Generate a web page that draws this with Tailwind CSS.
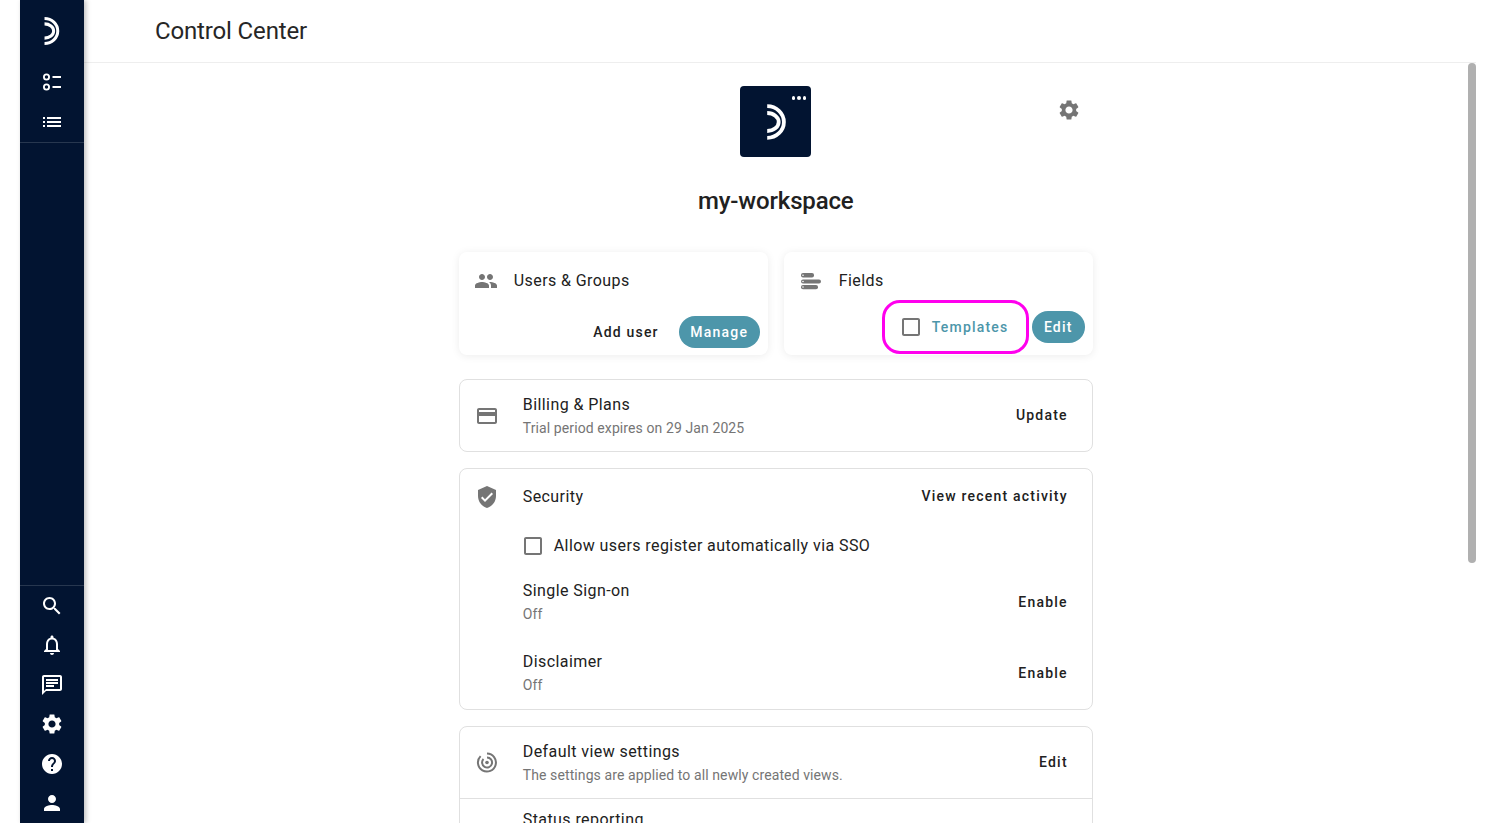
<!doctype html>
<html lang="en">
<head>
<meta charset="utf-8">
<title>Control Center</title>
<script src="https://cdn.jsdelivr.net/npm/@tailwindcss/browser@4"></script>
</head>
<body class="m-0 bg-white font-['Roboto',sans-serif]">
<div class="flex h-[823px] w-[1496px] overflow-hidden bg-white pl-5 pr-5 text-[#212121]">
  <aside class="z-10 flex h-full w-[63.5px] shrink-0 flex-col justify-between bg-[#021431] text-white shadow-[2px_0_5px_rgba(0,0,0,0.25)]">
    <div class="border-b border-white/15">
      <div class="flex h-[62px] items-center justify-center">
        <svg width="19" height="32" viewBox="0 0 24 40" fill="none" stroke="white" stroke-width="3.800"><path d="M3.200 4.100A16.700 15.900 0 0 1 3.200 35.900"/><path d="M3.200 11A11.500 9 0 0 1 3.200 29"/></svg>
      </div>
      <div class="flex h-10 items-center justify-center">
        <svg width="24" height="24" viewBox="0 0 24 24" fill="none" stroke="white" stroke-width="1.800"><circle cx="6.500" cy="7" r="2.600"/><circle cx="6.500" cy="17" r="2.600"/><path d="M12.500 7H21M12.500 17H21"/></svg>
      </div>
      <div class="flex h-10 items-center justify-center">
        <svg width="24" height="24" viewBox="0 0 24 24" fill="white"><path d="M3 13h2v-2H3v2zm0 4h2v-2H3v2zm0-8h2V7H3v2zm4 4h14v-2H7v2zm0 4h14v-2H7v2zM7 7v2h14V7H7z"/></svg>
      </div>
    </div>
    <div class="border-t border-white/15">
      <div class="flex h-[39.5px] items-center justify-center"><svg width="24" height="24" viewBox="0 0 24 24" fill="white"><path d="M15.500 14h-.79l-.28-.27C15.410 12.590 16 11.110 16 9.500 16 5.910 13.090 3 9.500 3S3 5.910 3 9.500 5.910 16 9.500 16c1.610 0 3.090-.59 4.230-1.570l.27.28v.79l5 4.990L20.490 19l-4.990-5zm-6 0C7.010 14 5 11.990 5 9.500S7.010 5 9.500 5 14 7.010 14 9.500 11.990 14 9.500 14z"/></svg></div>
      <div class="flex h-[39.5px] items-center justify-center"><svg width="24" height="24" viewBox="0 0 24 24" fill="white"><path d="M12 22c1.100 0 2-.9 2-2h-4c0 1.100.9 2 2 2zm6-6v-5c0-3.070-1.630-5.640-4.500-6.320V4c0-.83-.67-1.500-1.500-1.500s-1.500.67-1.500 1.500v.68C7.640 5.360 6 7.920 6 11v5l-2 2v1h16v-1l-2-2zm-2 1H8v-6c0-2.480 1.510-4.500 4-4.500s4 2.020 4 4.500v6z"/></svg></div>
      <div class="flex h-[39.5px] items-center justify-center"><svg width="24" height="24" viewBox="0 0 24 24" fill="white"><path d="M20 2H4c-1.100 0-2 .9-2 2v18l4-4h14c1.100 0 2-.9 2-2V4c0-1.100-.9-2-2-2zm0 14H6l-2 2V4h16v12zM6 12h8v2H6zm0-3h12v2H6zm0-3h12v2H6z"/></svg></div>
      <div class="flex h-[39.5px] items-center justify-center"><svg width="24" height="24" viewBox="0 0 24 24" fill="white"><path d="M19.140 12.940c.04-.3.06-.61.06-.94 0-.32-.02-.64-.07-.94l2.030-1.580c.18-.14.23-.41.12-.61l-1.920-3.320c-.12-.22-.37-.29-.59-.22l-2.390.96c-.5-.38-1.030-.7-1.620-.94l-.36-2.540c-.04-.24-.24-.41-.48-.41h-3.840c-.24 0-.43.17-.47.41l-.36 2.540c-.59.24-1.130.57-1.620.94l-2.390-.96c-.22-.08-.47 0-.59.22L2.740 8.870c-.12.21-.08.47.12.61l2.030 1.580c-.05.3-.09.63-.09.94s.02.64.07.94l-2.030 1.580c-.18.14-.23.41-.12.61l1.920 3.320c.12.22.37.29.59.22l2.390-.96c.5.38 1.030.7 1.620.94l.36 2.540c.05.24.24.41.48.41h3.840c.24 0 .44-.17.47-.41l.36-2.540c.59-.24 1.130-.56 1.620-.94l2.390.96c.22.08.47 0 .59-.22l1.920-3.320c.12-.22.07-.47-.12-.61l-2.010-1.580zM12 15.600c-1.980 0-3.600-1.620-3.600-3.600s1.620-3.600 3.600-3.600 3.600 1.620 3.600 3.600-1.620 3.600-3.600 3.600z"/></svg></div>
      <div class="flex h-[39.5px] items-center justify-center"><svg width="24" height="24" viewBox="0 0 24 24" fill="white"><path d="M12 2C6.480 2 2 6.480 2 12s4.480 10 10 10 10-4.480 10-10S17.520 2 12 2zm1 17h-2v-2h2v2zm2.070-7.750l-.9.92C13.450 12.900 13 13.500 13 15h-2v-.5c0-1.100.45-2.100 1.170-2.830l1.240-1.260c.37-.36.59-.86.59-1.410 0-1.100-.9-2-2-2s-2 .9-2 2H8c0-2.210 1.790-4 4-4s4 1.790 4 4c0 .88-.36 1.680-.93 2.250z"/></svg></div>
      <div class="flex h-[39.5px] items-center justify-center"><svg width="24" height="24" viewBox="0 0 24 24" fill="white"><path d="M12 12c2.210 0 4-1.790 4-4s-1.790-4-4-4-4 1.790-4 4 1.790 4 4 4zm0 2c-2.670 0-8 1.340-8 4v2h16v-2c0-2.660-5.330-4-8-4z"/></svg></div>
    </div>
  </aside>

  <main class="flex min-w-0 flex-1 flex-col">
    <header class="flex h-[63px] shrink-0 items-center border-b border-[#eeeeee] pl-[71.5px]">
      <h1 class="text-2xl font-normal leading-8 tracking-[-0.15px] text-[#262626]">Control Center</h1>
    </header>
    <div class="flex min-h-0 flex-1">
      <div class="flex-1 overflow-hidden">
        <div class="mx-auto w-[634px] pt-[23px]">
          <div class="grid grid-cols-[1fr_71px_1fr]">
            <div></div>
            <div class="relative flex h-[71px] w-[71px] items-center justify-center rounded bg-[#021431]">
              <svg width="24" height="40" viewBox="0 0 24 40" fill="none" stroke="white" stroke-width="3.800"><path d="M3.200 4.100A16.700 15.900 0 0 1 3.200 35.900"/><path d="M3.200 11A11.500 9 0 0 1 3.200 29"/></svg>
              <div class="absolute right-[5px] top-[10px] flex gap-[2px]">
                <span class="h-[3.500px] w-[3.500px] rounded-full bg-white"></span>
                <span class="h-[3.500px] w-[3.500px] rounded-full bg-white"></span>
                <span class="h-[3.500px] w-[3.500px] rounded-full bg-white"></span>
              </div>
            </div>
            <div class="flex justify-end pr-3 pt-3">
              <svg width="24" height="24" viewBox="0 0 24 24" fill="#757575"><path d="M19.140 12.940c.04-.3.06-.61.06-.94 0-.32-.02-.64-.07-.94l2.030-1.580c.18-.14.23-.41.12-.61l-1.920-3.320c-.12-.22-.37-.29-.59-.22l-2.390.96c-.5-.38-1.030-.7-1.620-.94l-.36-2.540c-.04-.24-.24-.41-.48-.41h-3.840c-.24 0-.43.17-.47.41l-.36 2.540c-.59.24-1.130.57-1.620.94l-2.390-.96c-.22-.08-.47 0-.59.22L2.740 8.870c-.12.21-.08.47.12.61l2.030 1.580c-.05.3-.09.63-.09.94s.02.64.07.94l-2.030 1.580c-.18.14-.23.41-.12.61l1.920 3.320c.12.22.37.29.59.22l2.390-.96c.5.38 1.030.7 1.620.94l.36 2.540c.05.24.24.41.48.41h3.840c.24 0 .44-.17.47-.41l.36-2.540c.59-.24 1.130-.56 1.620-.94l2.390.96c.22.08.47 0 .59-.22l1.920-3.320c.12-.22.07-.47-.12-.61l-2.010-1.580zM12 15.600c-1.980 0-3.600-1.620-3.600-3.600s1.620-3.600 3.600-3.600 3.600 1.620 3.600 3.600-1.620 3.600-3.600 3.600z"/></svg>
            </div>
          </div>
          <h2 class="mt-[28px] text-center text-2xl font-medium leading-8 tracking-[-0.15px] text-[#212121]">my-workspace</h2>

          <div class="mt-[35px] grid grid-cols-2 gap-4">
            <section class="h-[103px] rounded-lg bg-white shadow-[0_1px_8px_rgba(0,0,0,0.08)]">
              <div class="flex h-[57px] items-center gap-4 pl-[15px]">
                <svg width="24" height="24" viewBox="0 0 24 24" fill="#757575"><path d="M16 11c1.660 0 2.990-1.340 2.990-3S17.660 5 16 5c-1.660 0-3 1.340-3 3s1.340 3 3 3zm-8 0c1.660 0 2.990-1.340 2.990-3S9.660 5 8 5C6.340 5 5 6.340 5 8s1.340 3 3 3zm0 2c-2.330 0-7 1.170-7 3.500V19h14v-2.500c0-2.330-4.670-3.500-7-3.500zm8 0c-.29 0-.62.02-.97.05 1.160.84 1.970 1.970 1.970 3.450V19h6v-2.500c0-2.330-4.670-3.500-7-3.500z"/></svg>
                <span class="text-base tracking-[0.42px] text-[#212121]">Users &amp; Groups</span>
              </div>
              <div class="mt-[7px] flex items-center justify-end gap-5 pr-2">
                <span class="text-sm font-medium tracking-[1.2px] text-[#212121]">Add user</span>
                <span class="flex h-8 w-[81px] items-center justify-center rounded-full bg-[#4d96aa] text-sm font-medium tracking-[1.2px] text-white">Manage</span>
              </div>
            </section>
            <section class="h-[103px] rounded-lg bg-white shadow-[0_1px_8px_rgba(0,0,0,0.08)]">
              <div class="flex h-[57px] items-center gap-[15px] pl-4">
                <svg width="24" height="24" viewBox="0 0 24 24"><rect x="1" y="4" width="13" height="4.500" rx="2" fill="#757575"/><rect x="1" y="10.500" width="20" height="4" rx="2" fill="#757575"/><rect x="1" y="16" width="17" height="4.200" rx="2" fill="#757575"/><circle cx="3" cy="6.200" r=".8" fill="#fff"/><circle cx="3" cy="12.500" r=".8" fill="#fff"/><circle cx="3" cy="18" r=".8" fill="#fff"/></svg>
                <span class="text-base tracking-[0.42px] text-[#212121]">Fields</span>
              </div>
              <div class="-mt-[9px] flex items-center justify-end gap-[3px] pr-2">
                <div class="relative flex h-[54px] w-[147px] items-center gap-[9px] pl-[17px]">
                  <svg width="24" height="24" viewBox="0 0 24 24" fill="#757575"><path d="M19 5v14H5V5h14m0-2H5c-1.100 0-2 .9-2 2v14c0 1.100.9 2 2 2h14c1.100 0 2-.9 2-2V5c0-1.100-.9-2-2-2z"/></svg>
                  <span class="text-sm font-medium tracking-[1.2px] text-[#4d96aa]">Templates</span>
                  <div class="absolute inset-0 rounded-[18px] border-[3.500px] border-[#ff00ee]"></div>
                </div>
                <span class="flex h-8 w-[53px] items-center justify-center rounded-full bg-[#4d96aa] text-sm font-medium tracking-[1.2px] text-white">Edit</span>
              </div>
            </section>
          </div>

          <section class="mt-6 flex h-[73px] items-center rounded-lg border border-[#e0e0e0] pr-6">
            <div class="mr-2 flex w-[55px] shrink-0 justify-center">
              <svg width="24" height="24" viewBox="0 0 24 24" fill="#757575"><path d="M20 4H4c-1.110 0-1.990.89-1.990 2L2 18c0 1.110.89 2 2 2h16c1.110 0 2-.89 2-2V6c0-1.110-.89-2-2-2zm0 14H4v-6h16v6zm0-10H4V6h16v2z"/></svg>
            </div>
            <div class="flex-1">
              <div class="text-base leading-6 tracking-[0.42px] text-[#212121]">Billing &amp; Plans</div>
              <div class="text-sm leading-[22px] tracking-[0.1px] text-[#757575]">Trial period expires on 29 Jan 2025</div>
            </div>
            <span class="pb-[2px] text-sm font-medium tracking-[1.2px] text-[#212121]">Update</span>
          </section>

          <section class="mt-4 h-[242px] rounded-lg border border-[#e0e0e0]">
            <div class="flex h-14 items-center pr-6">
              <div class="mr-2 flex w-[55px] shrink-0 justify-center">
                <svg width="24" height="24" viewBox="0 0 24 24" fill="#757575"><path d="M12 1L3 5v6c0 5.550 3.840 10.740 9 12 5.160-1.260 9-6.450 9-12V5l-9-4zm-2 16l-4-4 1.410-1.410L10 14.170l6.590-6.590L18 9l-8 8z"/></svg>
              </div>
              <span class="flex-1 text-base tracking-[0.42px] text-[#212121]">Security</span>
              <span class="pb-[2px] text-sm font-medium tracking-[1.2px] text-[#212121]">View recent activity</span>
            </div>
            <div class="flex h-[41px] items-center gap-[9px] pl-[61px] pt-px">
              <svg width="24" height="24" viewBox="0 0 24 24" fill="#757575"><path d="M19 5v14H5V5h14m0-2H5c-1.100 0-2 .9-2 2v14c0 1.100.9 2 2 2h14c1.100 0 2-.9 2-2V5c0-1.100-.9-2-2-2z"/></svg>
              <span class="text-base tracking-[0.42px] text-[#212121]">Allow users register automatically via SSO</span>
            </div>
            <div class="flex h-[71px] items-center pl-[63px] pr-6">
              <div class="flex-1">
                <div class="text-base leading-6 tracking-[0.42px] text-[#212121]">Single Sign-on</div>
                <div class="text-sm leading-[22px] tracking-[0.1px] text-[#757575]">Off</div>
              </div>
              <span class="text-sm font-medium tracking-[1.2px] text-[#212121]">Enable</span>
            </div>
            <div class="flex h-[71px] items-center pl-[63px] pr-6">
              <div class="flex-1">
                <div class="text-base leading-6 tracking-[0.42px] text-[#212121]">Disclaimer</div>
                <div class="text-sm leading-[22px] tracking-[0.1px] text-[#757575]">Off</div>
              </div>
              <span class="text-sm font-medium tracking-[1.2px] text-[#212121]">Enable</span>
            </div>
          </section>

          <section class="mt-4 rounded-lg border border-[#e0e0e0]">
            <div class="flex h-[72px] items-center border-b border-[#e0e0e0] pr-6">
              <div class="mr-2 flex w-[55px] shrink-0 justify-center pb-[2px]">
                <svg width="24" height="24" viewBox="0 0 24 24" fill="none" stroke="#757575" stroke-width="2"><path d="M5.600 6.100A9 9 0 1 0 12 3.500"/><path d="M8.500 9A5 5 0 1 0 12 7.500"/><circle cx="12" cy="12.500" r="1.800" fill="#757575" stroke="none"/></svg>
              </div>
              <div class="flex-1">
                <div class="text-base leading-6 tracking-[0.42px] text-[#212121]">Default view settings</div>
                <div class="text-sm leading-[22px] tracking-[0.1px] text-[#757575]">The settings are applied to all newly created views.</div>
              </div>
              <span class="pb-[2px] text-sm font-medium tracking-[1.2px] text-[#212121]">Edit</span>
            </div>
            <div class="h-[71px] pl-[63px] pt-[9px]">
              <div class="text-base leading-6 tracking-[0.42px] text-[#212121]">Status reporting</div>
            </div>
          </section>
        </div>
      </div>
      <div class="h-[500px] w-2 shrink-0 rounded-full bg-[#b0b0b0]"></div>
    </div>
  </main>
</div>
</body>
</html>
